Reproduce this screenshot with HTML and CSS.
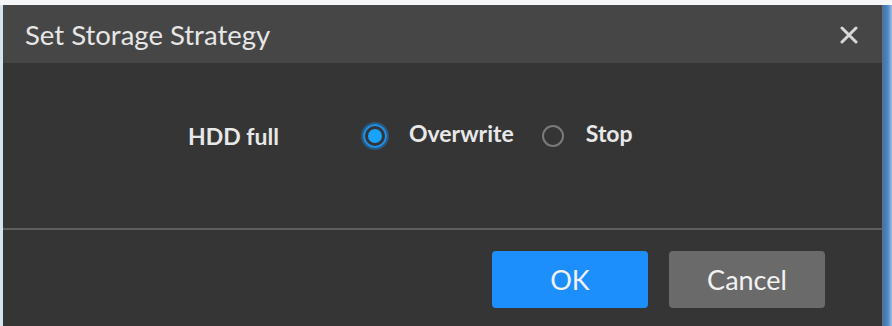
FILE: index.html
```html
<!DOCTYPE html>
<html>
<head>
<meta charset="utf-8">
<link rel="stylesheet" href="styles.css">
</head>
<body>
<div class="frame">
  <div class="edge-left"></div>
  <div class="dialog">
    <div class="header">
      <span class="title">Set Storage Strategy</span>
      <svg class="close" width="18" height="18" viewBox="0 0 18 18"><path d="M2 2L16 16M16 2L2 16" stroke="#d8d8d8" stroke-width="3" stroke-linecap="round"/></svg>
    </div>
    <div class="content">
      <div class="row">
        <span class="label">HDD full</span>
        <span class="radio checked"><span class="dot"></span></span>
        <span class="opt">Overwrite</span>
        <span class="radio"></span>
        <span class="opt">Stop</span>
      </div>
    </div>
    <div class="footer">
      <button class="btn ok">OK</button>
      <button class="btn cancel">Cancel</button>
    </div>
  </div>
  <div class="edge-right"></div>
</div>
</body>
</html>
```
FILE: styles.css
```css
html, body { margin: 0; padding: 0; }
body {
  background: #f4f6f7;
  width: 892px;
  height: 326px;
  overflow: hidden;
  font-family: Lato, "Open Sans", sans-serif;
}
.frame {
  display: flex;
  margin-top: 5px;
  height: 321px;
}
.edge-left { width: 3px; background: #d5e4ec; }
.edge-right {
  width: 10px;
  background: linear-gradient(to right, #5c6f86 0px, #3f7cbc 3px, #4f8ac6 6px, #9fbfdd 10px);
}
.dialog {
  flex: 1;
  display: flex;
  flex-direction: column;
  background: #353535;
}
.header {
  height: 58px;
  background: #464646;
  display: flex;
  align-items: center;
  justify-content: space-between;
  padding: 0 24px 0 22px;
}
.title { color: #e6e6e6; font-size: 27.5px; }
.close { display: block; margin-top: 2px; }
.content {
  height: 165px;
  border-bottom: 2px solid #5e5e5e;
  display: flex;
  align-items: center;
}
.row {
  display: flex;
  align-items: center;
  padding-left: 185px;
  margin-top: -20px;
}
.label { color: #e8e8e8; font-size: 23px; font-weight: 700; margin-right: 84px; }
.radio {
  width: 22px;
  height: 22px;
  border: 2px solid #7a7a7a;
  border-radius: 50%;
  box-sizing: border-box;
  display: flex;
  align-items: center;
  justify-content: center;
}
.radio.checked {
  width: 24px;
  height: 24px;
  border: 2px solid #1f8ee8;
  box-shadow: 0 0 0 2px #2a5878;
}
.dot { width: 14px; height: 14px; border-radius: 50%; background: #1aa2ff; }
.opt { color: #e8e8e8; font-size: 23px; font-weight: 700; margin-left: 22px; margin-right: 28px; margin-top: -5px; }
.footer {
  flex: 1;
  display: flex;
  justify-content: flex-end;
  align-items: flex-start;
  padding: 21px 57px 0 0;
  gap: 21px;
}
.btn {
  width: 156px;
  height: 57px;
  border: none;
  border-radius: 4px;
  font-family: Lato, "Open Sans", sans-serif;
  font-size: 27px;
  color: #f2f2f2;
}
.ok { background: #1c8ffd; }
.cancel { background: #6a6a6a; }
```
